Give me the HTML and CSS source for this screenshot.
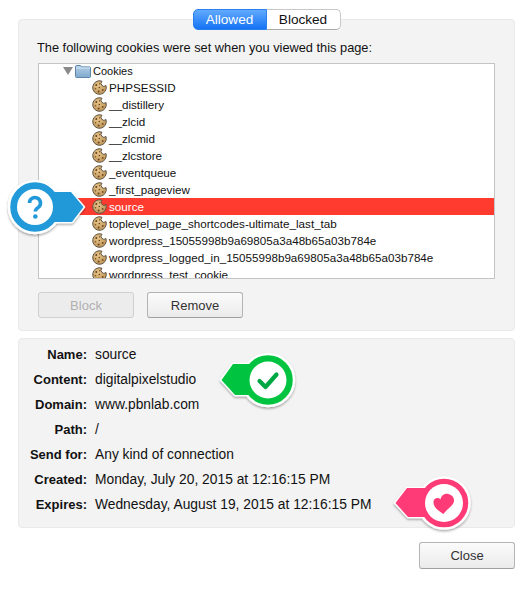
FILE: index.html
```html
<!DOCTYPE html>
<html>
<head>
  <title>Cookies</title>
  <link rel="stylesheet" href="styles.css">
</head>
<body>
<svg class="icon-defs" width="0" height="0">
  <defs>
    <linearGradient id="folderFill" x1="0" y1="0" x2="0" y2="1">
      <stop offset="0" stop-color="#b4d0e8"/>
      <stop offset="1" stop-color="#7fa9cd"/>
    </linearGradient>
    <radialGradient id="cookieFill" cx=".4" cy=".35" r=".8">
      <stop offset="0" stop-color="#e6c488"/>
      <stop offset="1" stop-color="#b88b4e"/>
    </radialGradient>
  </defs>
  <symbol id="cookie" viewBox="0 0 15 15">
    <path d="M10 1.200A6.800 6.800 0 1 0 14 5.500 2.700 2.700 0 0 1 10 1.200z" fill="url(#cookieFill)" stroke="#5f5648" stroke-width="1"/>
    <circle cx="4.300" cy="5" r="1" fill="#6a4526"/>
    <circle cx="7.600" cy="3.800" r=".7" fill="#7a5430"/>
    <circle cx="7.300" cy="7.500" r=".8" fill="#6a4526"/>
    <circle cx="3.500" cy="8.800" r=".8" fill="#7a5430"/>
    <circle cx="6.600" cy="11.400" r="1" fill="#6a4526"/>
    <circle cx="10.700" cy="9.900" r=".9" fill="#6a4526"/>
  </symbol>
  <filter id="badgeShadow" x="-20%" y="-20%" width="140%" height="140%">
    <feDropShadow dx="0" dy="1.500" stdDeviation="1.200" flood-color="#000" flood-opacity=".35"/>
  </filter>
</svg>

<div class="page">
  <div class="panel panel-top">
    <div class="tabs">
      <span class="tab tab-on">Allowed</span>
      <span class="tab">Blocked</span>
    </div>
    <p class="intro">The following cookies were set when you viewed this page:</p>

    <div class="tree">
      <div class="tree-root">
        <span class="arrow"></span>
        <svg class="folder" viewBox="0 0 16 14">
          <path d="M.5 2.500a1 1 0 0 1 1-1h4l1.200 1.400h7.800a1 1 0 0 1 1 1v8.600a1 1 0 0 1-1 1h-13a1 1 0 0 1-1-1z" fill="url(#folderFill)" stroke="#5f86a8"/>
          <path d="M1 4h14" stroke="#d6e6f3"/>
        </svg>
        <span>Cookies</span>
      </div>
      <div class="tree-row"><svg class="cookie"><use href="#cookie"/></svg>PHPSESSID</div>
      <div class="tree-row"><svg class="cookie"><use href="#cookie"/></svg>__distillery</div>
      <div class="tree-row"><svg class="cookie"><use href="#cookie"/></svg>__zlcid</div>
      <div class="tree-row"><svg class="cookie"><use href="#cookie"/></svg>__zlcmid</div>
      <div class="tree-row"><svg class="cookie"><use href="#cookie"/></svg>__zlcstore</div>
      <div class="tree-row"><svg class="cookie"><use href="#cookie"/></svg>_eventqueue</div>
      <div class="tree-row"><svg class="cookie"><use href="#cookie"/></svg>_first_pageview</div>
      <div class="tree-row selected"><svg class="cookie"><use href="#cookie"/></svg>source</div>
      <div class="tree-row"><svg class="cookie"><use href="#cookie"/></svg>toplevel_page_shortcodes-ultimate_last_tab</div>
      <div class="tree-row"><svg class="cookie"><use href="#cookie"/></svg>wordpress_15055998b9a69805a3a48b65a03b784e</div>
      <div class="tree-row"><svg class="cookie"><use href="#cookie"/></svg>wordpress_logged_in_15055998b9a69805a3a48b65a03b784e</div>
      <div class="tree-row"><svg class="cookie"><use href="#cookie"/></svg>wordpress_test_cookie</div>
    </div>

    <div class="actions">
      <button class="btn" disabled>Block</button>
      <button class="btn">Remove</button>
    </div>
  </div>

  <div class="panel panel-details">
    <span class="label">Name:</span><span>source</span>
    <span class="label">Content:</span><span>digitalpixelstudio</span>
    <span class="label">Domain:</span><span>www.pbnlab.com</span>
    <span class="label">Path:</span><span>/</span>
    <span class="label">Send for:</span><span>Any kind of connection</span>
    <span class="label">Created:</span><span>Monday, July 20, 2015 at 12:16:15 PM</span>
    <span class="label">Expires:</span><span>Wednesday, August 19, 2015 at 12:16:15 PM</span>
  </div>

  <div class="footer">
    <button class="btn">Close</button>
  </div>
</div>

<!-- callout badges sitting over the dialog -->
<svg class="badge badge-help" viewBox="0 0 90 70">
  <g filter="url(#badgeShadow)">
    <path d="M31 20H67L80 35 68 50H31z" fill="#2199d9" stroke="#fff" stroke-width="2.500" stroke-linejoin="round"/>
    <circle cx="31" cy="35" r="26" fill="#2199d9" stroke="#fff" stroke-width="2.500"/>
  </g>
  <path d="M31 20H67L79.500 35 68 50H31z" fill="#2199d9"/>
  <circle cx="31" cy="35" r="18" fill="#fff"/>
  <path d="M25.500 31a5.500 5.500 0 1 1 8.800 4.400c-2 1.400-3 2.200-3 4.200" fill="none" stroke="#2199d9" stroke-width="3.600"/>
  <circle cx="31.300" cy="44.500" r="2.300" fill="#2199d9"/>
</svg>

<svg class="badge badge-check" viewBox="0 0 90 70">
  <g filter="url(#badgeShadow)">
    <path d="M59 19H17L5 35 19 50H59z" fill="#00c43f" stroke="#fff" stroke-width="2.500" stroke-linejoin="round"/>
    <circle cx="52" cy="35" r="26" fill="#00c43f" stroke="#fff" stroke-width="2.500"/>
  </g>
  <path d="M59 19H17L5.500 35 19 50H59z" fill="#00c43f"/>
  <circle cx="52" cy="35" r="18.500" fill="#fff"/>
  <path d="M43.500 36l6 6 11-12.500" fill="none" stroke="#00a844" stroke-width="4.200" stroke-linecap="round" stroke-linejoin="round"/>
</svg>

<svg class="badge badge-heart" viewBox="0 0 90 70">
  <g filter="url(#badgeShadow)">
    <path d="M65 20H22L10 35 23 49H65z" fill="#ff3b77" stroke="#fff" stroke-width="2.500" stroke-linejoin="round"/>
    <circle cx="59" cy="35" r="25.500" fill="#ff3b77" stroke="#fff" stroke-width="2.500"/>
  </g>
  <path d="M65 20H22L10.500 35 23 49H65z" fill="#ff3b77"/>
  <circle cx="59" cy="35" r="19" fill="#fff"/>
  <path d="M58.500 46C54 43 48 39.500 48.500 33.500c.3-3.500 4.500-4.500 7-2 .5-4 4-6.500 8-5.500s6 4 5.500 7.500c-.7 4-6.500 7-10.500 12.500z" fill="#ff3b77"/>
</svg>
</body>
</html>
```

FILE: styles.css
```css
body {
  margin: 0;
  padding: 0;
  background-color: #fff;
  font-family: "Liberation Sans", Arial, sans-serif;
  font-size: 13px;
  color: #111;
}

.icon-defs {
  display: block;
  height: 0;
}

.page {
  position: relative;
  width: 497px;
  padding: 19px 17px 0 18px;
}

.panel {
  box-sizing: border-box;
  background-color: #f3f3f3;
  border: 1px solid #e9e9e9;
  border-radius: 4px;
}

/* Top panel with the tabs and the cookie tree */
.panel-top {
  height: 312px;
  padding: 0 19px;
}

.tabs {
  display: flex;
  justify-content: center;
  height: 21px;
  margin: -11px 0 0 0;
  font-size: 13.6px;
}

.tab {
  box-sizing: border-box;
  width: 74px;
  height: 21px;
  line-height: 19px;
  text-align: center;
  background-color: #fff;
  border: 1px solid #c8c8c8;
  border-bottom-color: #aaa;
  border-left: none;
  border-radius: 0 5px 5px 0;
}

.tab-on {
  width: 74px;
  color: #fff;
  background: linear-gradient(#62aaff, #1473f5);
  border: 1px solid #2a80ee;
  border-radius: 5px 0 0 5px;
}

.intro {
  margin: 10px 0 0 -1px;
  height: 23px;
  line-height: 16px;
  font-size: 12.8px;
}

.tree {
  box-sizing: border-box;
  height: 216px;
  overflow: hidden;
  background-color: #fff;
  border: 1px solid #c4c4c4;
  font-size: 11.65px;
}

.tree-root,
.tree-row {
  display: flex;
  align-items: center;
  height: 17px;
  white-space: nowrap;
}

.tree-root {
  box-sizing: border-box;
  height: 15px;
  padding: 0 0 1px 24px;
  font-size: 11px;
}

.tree-row {
  padding-left: 53px;
}

.tree-row.selected {
  background-color: #ff3b30;
  color: #fff;
}

.arrow {
  width: 0;
  height: 0;
  border-left: 5px solid transparent;
  border-right: 5px solid transparent;
  border-top: 8px solid #8a8a8a;
}

.folder {
  width: 16px;
  height: 14px;
  margin: 0 2px 0 2px;
}

.cookie {
  width: 15px;
  height: 15px;
  margin-right: 2px;
  flex-shrink: 0;
}

.actions {
  display: flex;
  gap: 13px;
  margin-top: 13px;
}

.btn {
  box-sizing: border-box;
  width: 96px;
  height: 26px;
  padding: 0;
  font-family: inherit;
  font-size: 13px;
  color: #333;
  background: linear-gradient(#fbfbfb, #ebebeb);
  border: 1px solid #b4b4b4;
  border-bottom-color: #a0a0a0;
  border-radius: 3px;
}

.btn:disabled {
  color: #b0b0b0;
  background: #ececec;
  border-color: #cfcfcf;
}

/* Details of the selected cookie */
.panel-details {
  display: grid;
  grid-template-columns: 68px 1fr;
  grid-auto-rows: 25px;
  column-gap: 8px;
  align-items: center;
  height: 190px;
  margin-top: 7px;
  padding-top: 3px;
  font-size: 13.8px;
}

.label {
  text-align: right;
  font-weight: bold;
  font-size: 13px;
}

.footer {
  display: flex;
  justify-content: flex-end;
  margin-top: 14px;
}

.footer .btn {
  height: 27px;
}

/* Callouts */
.badge {
  position: absolute;
  width: 90px;
  height: 70px;
}

.badge-help {
  left: 4px;
  top: 172px;
}

.badge-check {
  left: 216px;
  top: 345px;
}

.badge-heart {
  left: 385px;
  top: 468px;
}
```
